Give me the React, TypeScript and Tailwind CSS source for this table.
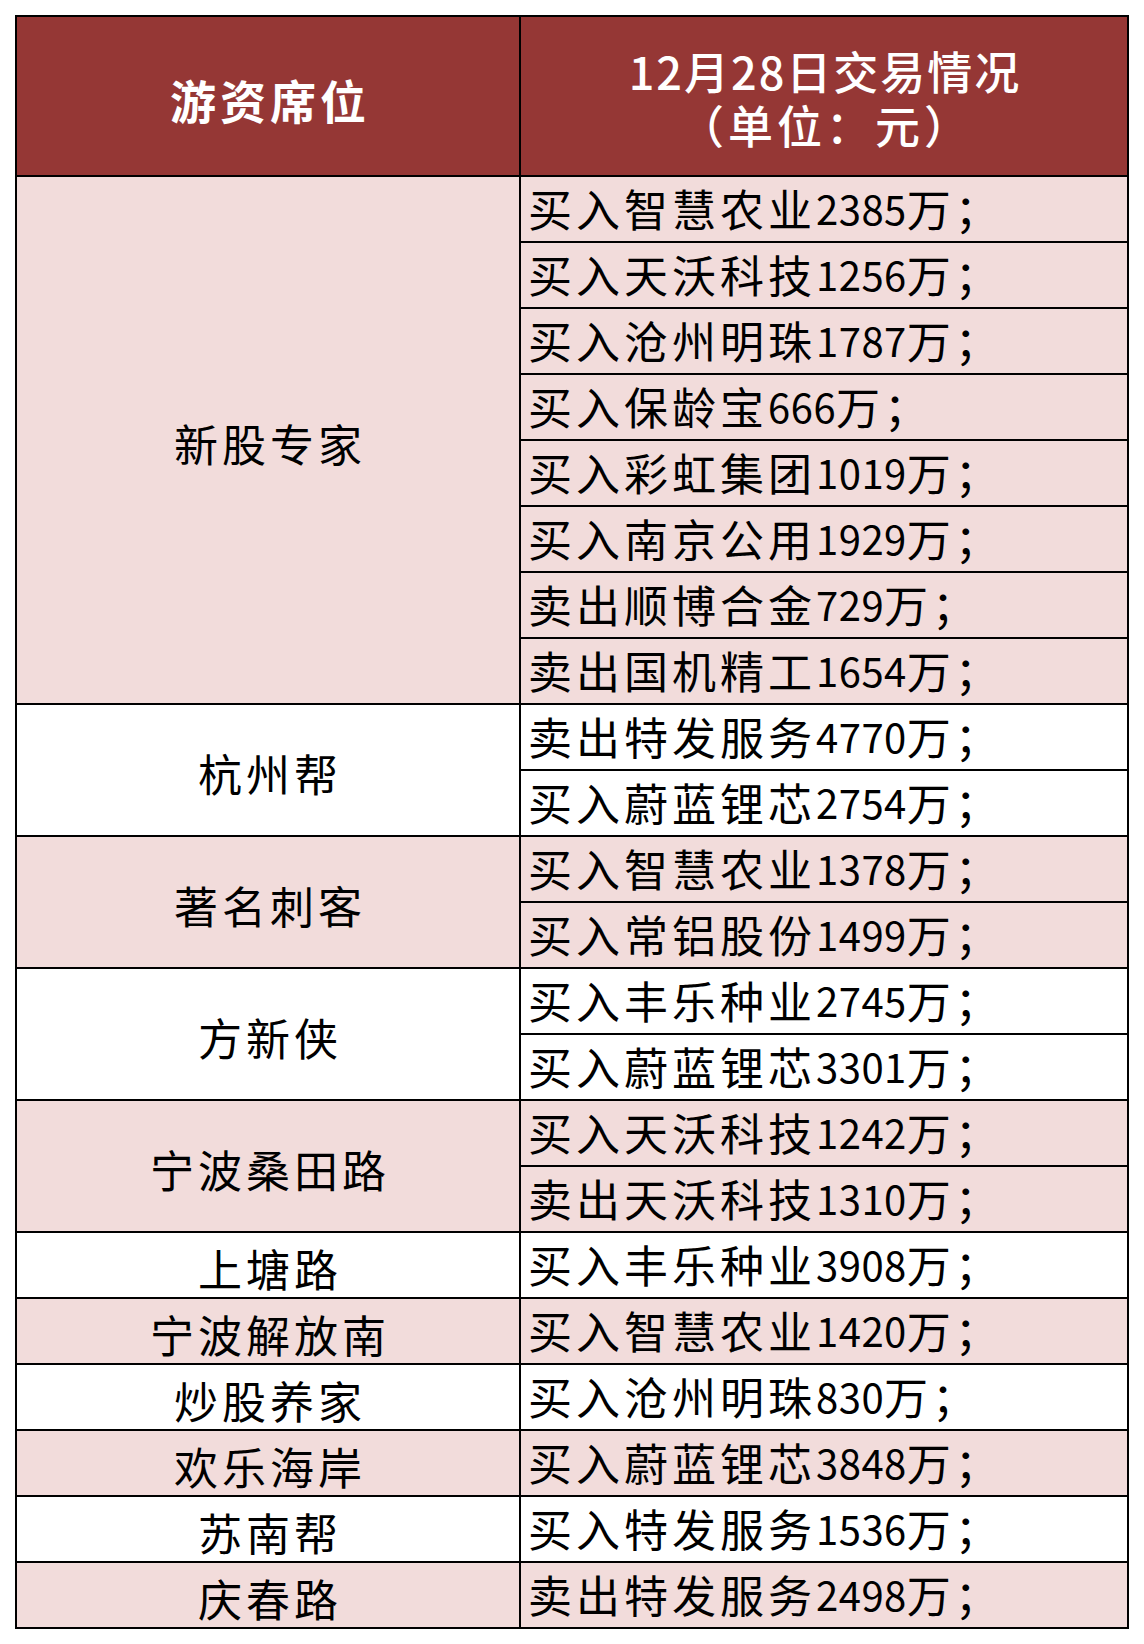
import React from "react";

type Group = { seat: string; pink: boolean; trades: string[] };

const groups: Group[] = [
  {
    seat: "新股专家",
    pink: true,
    trades: [
      "买入智慧农业2385万；",
      "买入天沃科技1256万；",
      "买入沧州明珠1787万；",
      "买入保龄宝666万；",
      "买入彩虹集团1019万；",
      "买入南京公用1929万；",
      "卖出顺博合金729万；",
      "卖出国机精工1654万；",
    ],
  },
  { seat: "杭州帮", pink: false, trades: ["卖出特发服务4770万；", "买入蔚蓝锂芯2754万；"] },
  { seat: "著名刺客", pink: true, trades: ["买入智慧农业1378万；", "买入常铝股份1499万；"] },
  { seat: "方新侠", pink: false, trades: ["买入丰乐种业2745万；", "买入蔚蓝锂芯3301万；"] },
  { seat: "宁波桑田路", pink: true, trades: ["买入天沃科技1242万；", "卖出天沃科技1310万；"] },
  { seat: "上塘路", pink: false, trades: ["买入丰乐种业3908万；"] },
  { seat: "宁波解放南", pink: true, trades: ["买入智慧农业1420万；"] },
  { seat: "炒股养家", pink: false, trades: ["买入沧州明珠830万；"] },
  { seat: "欢乐海岸", pink: true, trades: ["买入蔚蓝锂芯3848万；"] },
  { seat: "苏南帮", pink: false, trades: ["买入特发服务1536万；"] },
  { seat: "庆春路", pink: true, trades: ["卖出特发服务2498万；"] },
];

const spans: Record<number, string> = {
  1: "row-span-1",
  2: "row-span-2",
  8: "row-span-8",
};

// amounts are set a little smaller than the hanzi around them
function Trade({ text }: { text: string }) {
  const parts = text.split(/(\d+)/);
  return (
    <>
      {parts.map((p, i) =>
        /^\d+$/.test(p) ? (
          <span key={i} className="text-[40px] tracking-[0.5px]">
            {p}
          </span>
        ) : (
          <span key={i}>{p}</span>
        )
      )}
    </>
  );
}

export default function App() {
  return (
    <div className="min-h-[1644px] w-[1144px] bg-white pl-[15px] pt-[15px] font-['Noto_Sans_CJK_SC',sans-serif]">
      <div className="grid w-[1114px] grid-cols-[502px_606px] grid-rows-[158px_repeat(22,64px)] gap-[2px] bg-black p-[2px] text-[44px] leading-none tracking-[4px] text-black">
        <div className="flex items-center justify-center bg-[#953735] pl-[4px] pt-[5px] text-[46px] font-semibold text-white">
          游资席位
        </div>
        <div className="flex flex-col items-center justify-center bg-[#953735] pt-[4px] text-[45px] font-medium leading-[54px] text-white">
          <div className="pl-[2px] tracking-[2px]">12月28日交易情况</div>
          <div className="pl-[4px] tracking-[4px]">（单位：元）</div>
        </div>
        {groups.map((g) => {
          const bg = g.pink ? "bg-[#f2dcdb]" : "bg-white";
          return (
            <React.Fragment key={g.seat}>
              <div className={`${spans[g.trades.length]} ${bg} flex items-center justify-center pl-[4px] pt-[6px]`}>
                {g.seat}
              </div>
              {g.trades.map((t) => (
                <div key={t} className={`${bg} col-start-2 flex items-center whitespace-nowrap pb-[3px] pl-[7px]`}>
                  <Trade text={t} />
                </div>
              ))}
            </React.Fragment>
          );
        })}
      </div>
    </div>
  );
}
